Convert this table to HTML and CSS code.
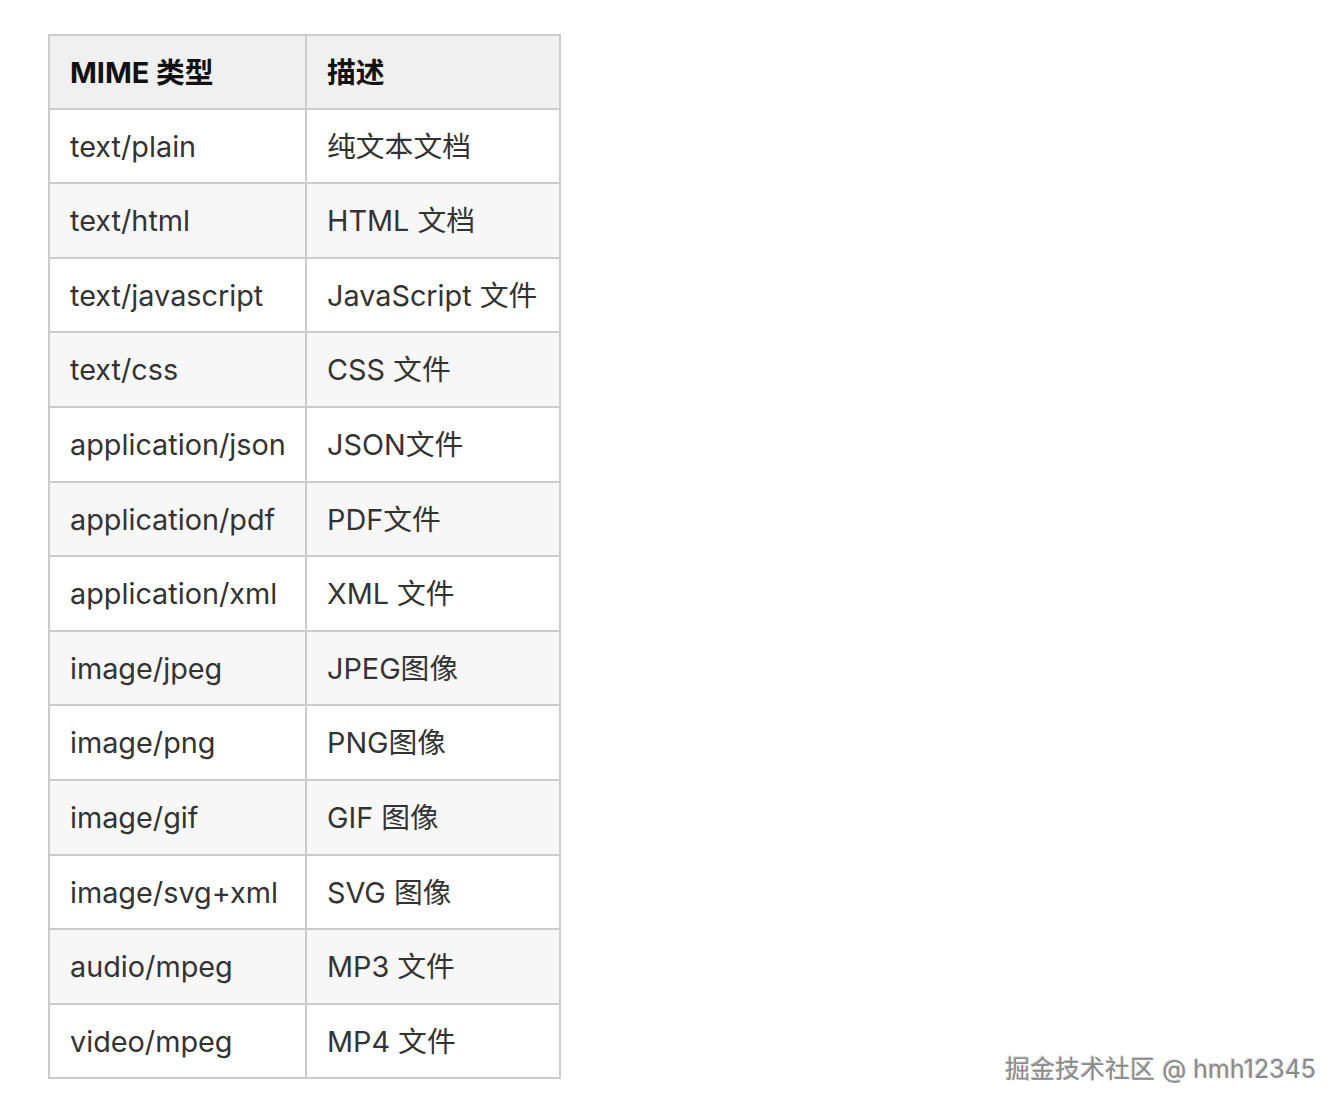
FILE: index.html
```html
<!DOCTYPE html>
<html lang="zh">
<head>
<meta charset="utf-8">
<title>MIME 类型</title>
<link rel="stylesheet" href="styles.css">
</head>
<body>
<div class="page">
  <table class="mime">
    <colgroup><col class="c1"><col class="c2"></colgroup>
    <thead>
      <tr><th>MIME 类型</th><th>描述</th></tr>
    </thead>
    <tbody>
      <tr><td>text/plain</td><td>纯文本文档</td></tr>
      <tr><td>text/html</td><td>HTML 文档</td></tr>
      <tr><td>text/javascript</td><td>JavaScript 文件</td></tr>
      <tr><td>text/css</td><td>CSS 文件</td></tr>
      <tr><td>application/json</td><td>JSON文件</td></tr>
      <tr><td>application/pdf</td><td>PDF文件</td></tr>
      <tr><td>application/xml</td><td>XML 文件</td></tr>
      <tr><td>image/jpeg</td><td>JPEG图像</td></tr>
      <tr><td>image/png</td><td>PNG图像</td></tr>
      <tr><td>image/gif</td><td>GIF 图像</td></tr>
      <tr><td>image/svg+xml</td><td>SVG 图像</td></tr>
      <tr><td>audio/mpeg</td><td>MP3 文件</td></tr>
      <tr><td>video/mpeg</td><td>MP4 文件</td></tr>
    </tbody>
  </table>
  <div class="watermark">掘金技术社区 @ hmh12345</div>
</div>
</body>
</html>
```

FILE: styles.css
```css
html, body {
  margin: 0;
  padding: 0;
  background: #ffffff;
}
.page {
  position: relative;
  width: 1344px;
  height: 1112px;
  padding: 34px 0 0 48px;
  box-sizing: border-box;
  font-family: "Inter", "Noto Sans CJK SC", sans-serif;
}
.mime {
  border-collapse: collapse;
  border: 2px solid #cccccc;
  font-size: 28.8px;
  color: #333333;
  table-layout: fixed;
  width: 511px;
}
.mime .c1 { width: 257px; }
.mime .c2 { width: 254px; }
.mime th, .mime td {
  border: 2px solid #cccccc;
  padding: 2px 0 0 20px;
  height: 70.6px;
  text-align: left;
  white-space: nowrap;
  vertical-align: baseline;
  line-height: 70px;
}
.mime th {
  height: 69.6px;
  line-height: 69px;
  background: #f0f0f0;
  color: #111111;
  font-weight: bold;
}
.mime tbody tr:nth-child(odd) td { background: #ffffff; }
.mime tbody tr:nth-child(even) td { background: #f7f7f7; }
.watermark {
  position: absolute;
  right: 28px;
  bottom: 28px;
  font-size: 25px;
  line-height: 30px;
  color: #8a8a8a;
  text-shadow: 1px 1px 0 #ffffff, -1px -1px 0 #d0d0d0;
}
```
